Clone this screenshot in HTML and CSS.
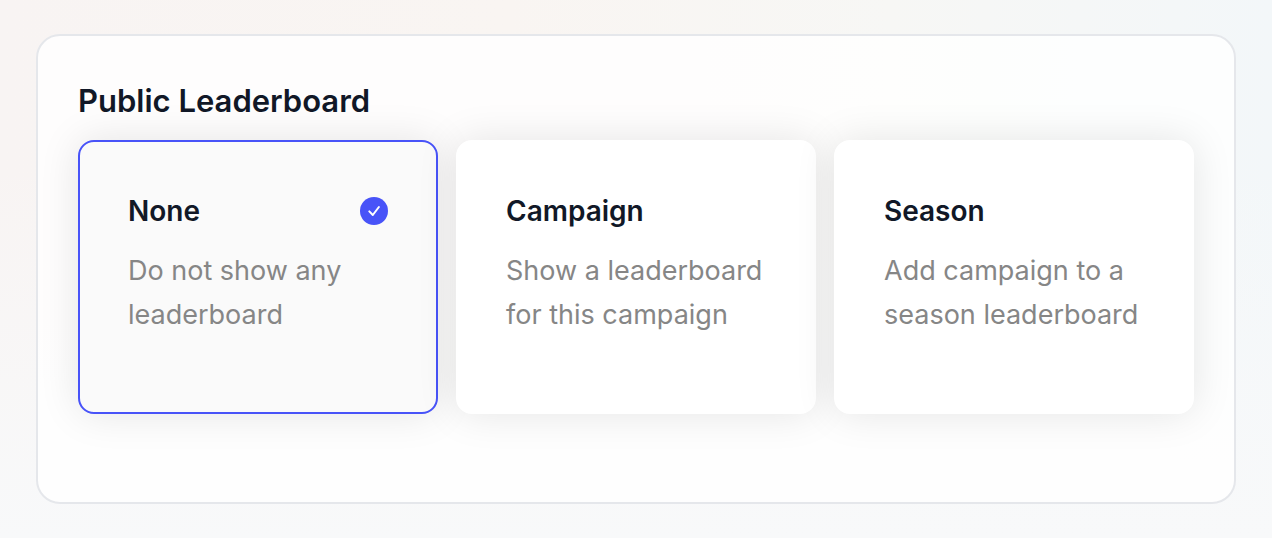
FILE: index.html
```html
<!DOCTYPE html>
<html lang="en">
<head>
<meta charset="utf-8">
<meta name="viewport" content="width=device-width, initial-scale=1">
<title>Public Leaderboard</title>
<link rel="stylesheet" href="styles.css">
</head>
<body>
<main class="panel">
  <h2 class="panel-title" id="leaderboard-title">Public Leaderboard</h2>
  <div class="options" role="radiogroup" aria-labelledby="leaderboard-title">
    <label class="option">
      <input class="option-input" type="radio" name="leaderboard" value="none" checked>
      <span class="option-head">
        <span class="option-name">None</span>
        <svg class="option-check" viewBox="0 0 28 28" aria-hidden="true"><circle cx="14" cy="14" r="14"/><path d="M9.3 14.4l3.5 3.6L18.9 10"/></svg>
      </span>
      <span class="option-text">Do not show any leaderboard</span>
    </label>
    <label class="option">
      <input class="option-input" type="radio" name="leaderboard" value="campaign">
      <span class="option-head">
        <span class="option-name">Campaign</span>
        <svg class="option-check" viewBox="0 0 28 28" aria-hidden="true"><circle cx="14" cy="14" r="14"/><path d="M9.3 14.4l3.5 3.6L18.9 10"/></svg>
      </span>
      <span class="option-text">Show a leaderboard for this campaign</span>
    </label>
    <label class="option">
      <input class="option-input" type="radio" name="leaderboard" value="season">
      <span class="option-head">
        <span class="option-name">Season</span>
        <svg class="option-check" viewBox="0 0 28 28" aria-hidden="true"><circle cx="14" cy="14" r="14"/><path d="M9.3 14.4l3.5 3.6L18.9 10"/></svg>
      </span>
      <span class="option-text">Add campaign to a season leaderboard</span>
    </label>
  </div>
</main>
</body>
</html>
```
FILE: styles.css
```css
* {
  box-sizing: border-box;
}

body {
  margin: 0;
  min-height: 100vh;
  padding: 34px 36px;
  font-family: Inter, "Liberation Sans", sans-serif;
  color: #111827;
  background:
    linear-gradient(to bottom, rgba(248, 249, 250, 0) 30%, #f8f9fa 100%),
    linear-gradient(to right, #f8f4f3 0%, #f9f5f2 40%, #f7f7f5 70%, #f3f7f9 100%);
}

.panel {
  padding: 40px 40px 88px;
  border: 2px solid #e5e7eb;
  border-radius: 24px;
  background: rgba(255, 255, 255, 0.8);
}

.panel-title {
  margin: 0 0 14px;
  font-size: 31px;
  font-weight: 600;
  line-height: 50px;
}

.options {
  display: grid;
  grid-template-columns: repeat(3, 1fr);
  gap: 18px;
}

.option {
  display: flex;
  flex-direction: column;
  gap: 17px;
  padding: 48px 48px 75px;
  border: 2px solid #fff;
  border-radius: 16px;
  background: #fff;
  box-shadow: 0 0 40px rgba(0, 0, 0, 0.1);
  cursor: pointer;
}

.option:has(.option-input:checked) {
  border-color: #4853f8;
  background: #fafafa;
}

.option-input {
  position: absolute;
  opacity: 0;
}

.option-head {
  display: flex;
  align-items: center;
  justify-content: space-between;
}

.option-name {
  font-size: 28px;
  font-weight: 600;
  line-height: 42px;
}

.option-check {
  display: none;
  width: 28px;
  height: 28px;
}

.option-input:checked + .option-head .option-check {
  display: block;
}

.option-check circle {
  fill: #4853f8;
}

.option-check path {
  fill: none;
  stroke: #fff;
  stroke-width: 2;
  stroke-linecap: round;
  stroke-linejoin: round;
}

.option-text {
  color: #868686;
  font-size: 27px;
  line-height: 44px;
}
```
